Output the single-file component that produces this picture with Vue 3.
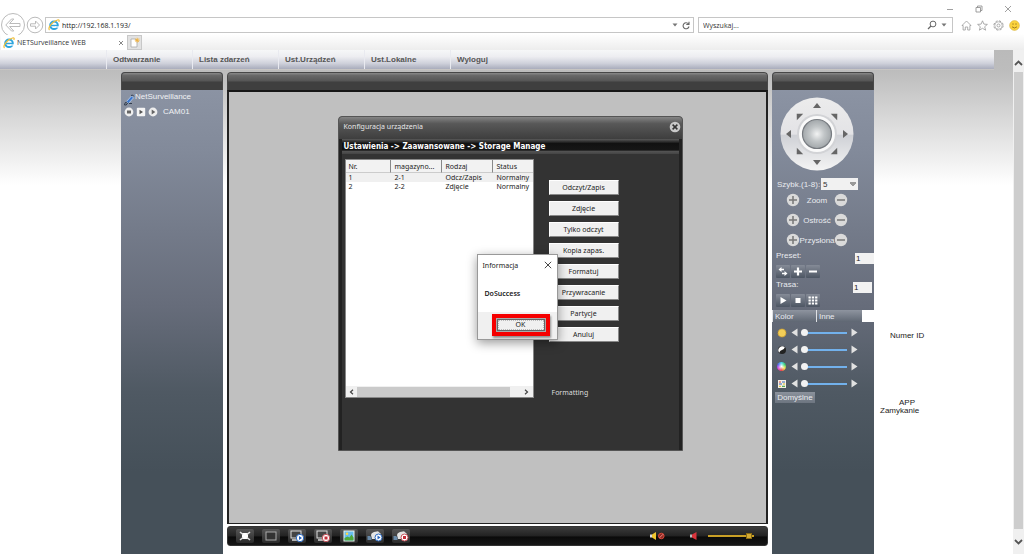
<script setup>
import { ref } from 'vue'

const menu = ['Odtwarzanie', 'Lista zdarzeń', 'Ust.Urządzeń', 'Ust.Lokalne', 'Wyloguj']
const disks = [
  { nr: '1', store: '2-1', kind: 'Odcz/Zapis', status: 'Normalny' },
  { nr: '2', store: '2-2', kind: 'Zdjęcie', status: 'Normalny' },
]
const actions = ['Odczyt/Zapis', 'Zdjęcie', 'Tylko odczyt', 'Kopia zapas.', 'Formatuj', 'Przywracanie', 'Partycje', 'Anuluj']
const lens = ['Zoom', 'Ostrość', 'Przysłona']
const levels = ref([
  { id: 'brightness', label: 'Jasność', value: 0 },
  { id: 'contrast', label: 'Kontrast', value: 0 },
  { id: 'hue', label: 'Barwa', value: 0 },
  { id: 'saturation', label: 'Nasycenie', value: 0 },
])
const volume = ref(94)
const url = ref('http://192.168.1.193/')
const preset = ref('1')
const tour = ref('1')
const speed = ref('5')
const arrows = [0, 45, 90, 135, 180, 225, 270, 315]
</script>

<template>
  <div class="window">
    <header class="chrome">
      <div class="titlebar">
        <button aria-label="Minimalizuj"><svg width="8" height="8" viewBox="0 0 8 8"><path d="M1 4.5h6" /></svg></button>
        <button aria-label="Przywróć"><svg width="8" height="8" viewBox="0 0 8 8"><path d="M1 2.5h4.5v4.5H1zM2.500 2.500V1h4.500v4.500H5.500" /></svg></button>
        <button aria-label="Zamknij"><svg width="8" height="8" viewBox="0 0 8 8"><path d="M1 1l6 6M7 1L1 7" /></svg></button>
      </div>
      <div class="address">
        <button class="back" aria-label="Wstecz">
          <svg width="26" height="26" viewBox="0 0 26 26"><circle cx="13" cy="13" r="11.500" /><path d="M11.500 7L5.800 13l5.700 6h2.300l-4.200-4.500H20v-3H9.600L13.800 7z" /></svg>
        </button>
        <button class="fwd" aria-label="Dalej">
          <svg width="18" height="18" viewBox="0 0 18 18"><circle cx="9" cy="9" r="7.800" /><path d="M9.500 5l4 4-4 4v-2.800H4.500V7.800h5z" /></svg>
        </button>
        <div class="field url">
          <svg class="ie" width="12" height="12" viewBox="0 0 12 12"><circle cx="6" cy="6.300" r="3.800" fill="none" stroke="#2ea5dd" stroke-width="2" /><path d="M3 6.500h7" stroke="#2ea5dd" stroke-width="1.500" /><path d="M7 8h4" stroke="#fff" stroke-width="1.200" /><path d="M1.500 11C-.5 9 4 2.500 9.500 1c2-.4 2 .8 1.200 2" fill="none" stroke="#f0bf3b" stroke-width="1.200" /></svg>
          <input v-model="url" aria-label="Adres">
          <svg width="6" height="4" viewBox="0 0 6 4"><path d="M.5.5h5L3 3.500z" fill="#777" /></svg>
          <button class="reload" aria-label="Odśwież"><svg width="8" height="9" viewBox="0 0 8 9"><path d="M6.500 3A3 3 0 1 0 7 5.500M7 .8v2.700H4.300" fill="none" stroke="#666" stroke-width="1.100" /></svg></button>
        </div>
        <div class="field search">
          <input placeholder="Wyszukaj..." aria-label="Wyszukaj">
          <button aria-label="Szukaj"><svg width="10" height="10" viewBox="0 0 10 10"><circle cx="6" cy="4" r="2.900" fill="none" stroke="#666" /><path d="M4 6L1 9" stroke="#666" stroke-width="1.300" /></svg></button>
          <svg width="6" height="4" viewBox="0 0 6 4"><path d="M.5.5h5L3 3.500z" fill="#777" /></svg>
        </div>
        <nav class="tools" aria-label="Narzędzia">
          <button aria-label="Strona główna"><svg width="11" height="11" viewBox="0 0 11 11"><path d="M1 5.500L5.500 1 10 5.500H8.900V10H6.700V7H4.300v3H2.100V5.500z" /></svg></button>
          <button aria-label="Ulubione"><svg width="11" height="11" viewBox="0 0 11 11"><path d="M5.500.8l1.400 3.300 3.500.3-2.700 2.300.9 3.500-3.100-1.900-3.100 1.900.9-3.500L.6 4.400l3.500-.3z" /></svg></button>
          <button aria-label="Ustawienia"><svg width="11" height="11" viewBox="0 0 11 11"><circle cx="5.500" cy="5.500" r="4.600" stroke-dasharray="2.200 1.400" stroke-width="1" /><circle cx="5.500" cy="5.500" r="3.700" stroke-width=".6" /><circle cx="5.500" cy="5.500" r="1.500" /></svg></button>
          <button aria-label="Opinia"><svg width="11" height="11" viewBox="0 0 11 11"><circle cx="5.500" cy="5.500" r="4.900" fill="#fbd33e" stroke="#d9b64a" stroke-width=".6" /><path d="M4 3.300v1.500M7 3.300v1.500M3 6.800q2.500 2.400 5 0" stroke="#8b6a1c" stroke-width=".8" /></svg></button>
        </nav>
      </div>
      <div class="tabs">
        <div class="tab">
          <svg class="ie" width="12" height="12" viewBox="0 0 12 12"><circle cx="6" cy="6.300" r="3.800" fill="none" stroke="#2ea5dd" stroke-width="2" /><path d="M3 6.500h7" stroke="#2ea5dd" stroke-width="1.500" /><path d="M7 8h4" stroke="#fff" stroke-width="1.200" /><path d="M1.500 11C-.5 9 4 2.500 9.500 1c2-.4 2 .8 1.200 2" fill="none" stroke="#f0bf3b" stroke-width="1.200" /></svg>
          <span>NETSurveillance WEB</span>
          <button aria-label="Zamknij kartę"><svg width="6" height="6" viewBox="0 0 6 6"><path d="M1 1l4 4M5 1L1 5" stroke="#888" /></svg></button>
        </div>
        <button class="newtab" aria-label="Nowa karta"><svg width="11" height="12" viewBox="0 0 11 12"><path d="M2 2h4l2 2v6H2z" fill="#fff" stroke="#aaa" stroke-width=".8" /><path d="M8.200.8v4.800M5.800 3.200h4.800M6.500 1.500l3.400 3.400M9.900 1.500L6.500 4.900" stroke="#f2b23c" stroke-width=".9" /></svg></button>
      </div>
    </header>

    <div class="viewport">
      <main class="page">
        <nav class="menu" aria-label="Menu">
          <a v-for="m in menu" :key="m" href="#">{{ m }}</a>
        </nav>

        <div class="columns">
          <aside class="side">
            <div class="cap"></div>
            <div class="tree">
              <div class="device">
                <svg width="12" height="12" viewBox="0 0 12 12"><path d="M3.500 7.500L8.500 2l2 1.800-5 5.700z" fill="#3c78cf" stroke="#c6d8f2" stroke-width=".7" /><path d="M8 1.500q2-1.200 2.800.8M4 8q-2.500 0-2.500 3h1.800q.2-2 2.200-2M6 9.500h3" stroke="#273345" stroke-width=".9" fill="none" /></svg>
                <span>NetSurveillance</span>
              </div>
              <div class="camera">
                <svg width="10" height="10" viewBox="0 0 10 10"><circle cx="5" cy="5" r="4.400" fill="#eee" /><rect x="3" y="3.500" width="4" height="3" fill="#666" /></svg>
                <svg width="10" height="10" viewBox="0 0 10 10"><rect x=".8" y=".8" width="8.400" height="8.400" rx="1" fill="#f4f4f4" /><path d="M3.500 2.800L7 5 3.500 7.200z" fill="#555" /></svg>
                <svg width="10" height="10" viewBox="0 0 10 10"><circle cx="5" cy="5" r="4.400" fill="#eee" /><path d="M3.700 2.600L7.300 5 3.700 7.400z" fill="#666" /></svg>
                <span>CAM01</span>
              </div>
            </div>
          </aside>

          <section class="center">
            <div class="cap"></div>
            <div class="video">
              <section class="dialog" aria-label="Konfiguracja urządzenia">
                <header>
                  <span>Konfiguracja urządzenia</span>
                  <button aria-label="Zamknij okno"><svg width="12" height="12" viewBox="0 0 12 12"><circle cx="6" cy="6" r="5.300" fill="#c9c9c9" /><path d="M3.600 3.600l4.800 4.800M8.400 3.600L3.600 8.400" stroke="#333" stroke-width="1.500" /></svg></button>
                </header>
                <h1>Ustawienia -&gt; Zaawansowane -&gt; Storage Manage</h1>
                <div class="storage">
                  <div class="list">
                    <table>
                      <thead><tr><th>Nr.</th><th>magazyno...</th><th>Rodzaj</th><th>Status</th></tr></thead>
                      <tbody>
                        <tr v-for="d in disks" :key="d.nr"><td>{{ d.nr }}</td><td>{{ d.store }}</td><td>{{ d.kind }}</td><td>{{ d.status }}</td></tr>
                      </tbody>
                    </table>
                    <div class="hscroll">
                      <button aria-label="Przewiń w lewo"><svg width="5" height="6" viewBox="0 0 5 6"><path d="M4 .8L1.500 3 4 5.200" fill="none" stroke="#444" stroke-width="1.200" /></svg></button>
                      <i></i>
                      <button aria-label="Przewiń w prawo"><svg width="5" height="6" viewBox="0 0 5 6"><path d="M1 .8L3.500 3 1 5.200" fill="none" stroke="#444" stroke-width="1.200" /></svg></button>
                    </div>
                  </div>
                  <div class="actions">
                    <button v-for="a in actions" :key="a">{{ a }}</button>
                    <p>Formatting</p>
                  </div>
                </div>

                <div class="message" role="alertdialog" aria-label="Informacja">
                  <div class="mhead">
                    <span>Informacja</span>
                    <button aria-label="Zamknij komunikat"><svg width="8" height="8" viewBox="0 0 8 8"><path d="M.8.800l6.400 6.400M7.200.800L.8 7.200" stroke="#333" stroke-width=".9" /></svg></button>
                  </div>
                  <p>DoSuccess</p>
                  <div class="mfoot"><div class="mark"><button>OK</button></div></div>
                </div>
              </section>
            </div>
            <div class="playbar">
              <button aria-label="Pełny ekran"><svg width="18" height="14" viewBox="0 0 18 14"><rect x="6" y="4" width="6" height="6" fill="#fff" /><path d="M4 3l3 2.500M14 3l-3 2.500M4 11l3-2.500M14 11l-3-2.500" stroke="#ddd" stroke-width="1.600" /></svg></button>
              <button aria-label="Jedno okno"><svg width="18" height="14" viewBox="0 0 18 14"><rect x="4" y="3" width="10" height="8" fill="#333" stroke="#aaa" /></svg></button>
              <button aria-label="Odtwórz wszystko"><svg width="18" height="14" viewBox="0 0 18 14"><rect x="3" y="2" width="10" height="7" fill="#444" stroke="#ddd" /><path d="M4 11h6" stroke="#ddd" stroke-width="1.500" /><circle cx="12" cy="9" r="3.700" fill="#fff" stroke="#2d6cc4" /><path d="M11 7l3 2-3 2z" fill="#2562bd" /></svg></button>
              <button aria-label="Zatrzymaj wszystko"><svg width="18" height="14" viewBox="0 0 18 14"><rect x="3" y="2" width="10" height="7" fill="#444" stroke="#ddd" /><path d="M4 11h6" stroke="#ddd" stroke-width="1.500" /><circle cx="12" cy="9" r="3.700" fill="#fff" stroke="#c5525a" /><rect x="10.500" y="7.500" width="3" height="3" fill="#c52f3a" /></svg></button>
              <button aria-label="Zdjęcie"><svg width="18" height="14" viewBox="0 0 18 14"><rect x="4" y="2" width="10" height="10" fill="#68bdf0" stroke="#eef6ee" /><circle cx="7" cy="4.800" r="1.300" fill="#ffd94a" /><path d="M4.500 11.500V9l3-1.500 2 1 2-3 2 3v3z" fill="#4fa83c" /></svg></button>
              <button aria-label="Nagrywaj"><svg width="18" height="14" viewBox="0 0 18 14"><path d="M5 6q0-2 3-3l4-.8L15 5l-5 5H6z" fill="#e4e4e4" /><path d="M1.500 7h2.500l1.500 1.500V11H1.500z" fill="#6889a8" /><circle cx="12.500" cy="8.500" r="3.500" fill="#fff" stroke="#2d6cc4" /><path d="M11.500 6.500l3 2-3 2z" fill="#2562bd" /></svg></button>
              <button aria-label="Zatrzymaj nagrywanie"><svg width="18" height="14" viewBox="0 0 18 14"><path d="M5 6q0-2 3-3l4-.8L15 5l-5 5H6z" fill="#e4e4e4" /><path d="M1.500 7h2.500l1.500 1.500V11H1.500z" fill="#6889a8" /><circle cx="12.500" cy="8.500" r="3.500" fill="#fff" stroke="#c5525a" /><rect x="11" y="7" width="3" height="3" fill="#c52f3a" /></svg></button>
              <div class="sound">
                <button aria-label="Wycisz"><svg width="16" height="10" viewBox="0 0 16 10"><path d="M1 3.500h2v3H1z" fill="#ddd" /><path d="M3 3.500L7 1v8L3 6.500z" fill="#f0c630" /><circle cx="12.300" cy="5" r="2.800" fill="#8e2a22" stroke="#d6483a" /><path d="M10.500 6.800l3.600-3.600" stroke="#e88" /></svg></button>
                <button aria-label="Głośność"><svg width="10" height="10" viewBox="0 0 10 10"><path d="M1 3.500h2v3H1z" fill="#bbb" /><path d="M3 3.500L7.500 1v8L3 6.500z" fill="#d9343c" /></svg></button>
                <input v-model="volume" type="range" aria-label="Poziom głośności">
              </div>
            </div>
          </section>

          <aside class="side ptz">
            <div class="cap"></div>
            <div class="panel">
              <svg class="dpad" width="76" height="76" viewBox="0 0 76 76" role="img" aria-label="Sterowanie kamerą">
                <defs>
                  <linearGradient id="ring" x1="0" y1="0" x2="0" y2="1"><stop offset="0" stop-color="#ececec" /><stop offset=".5" stop-color="#e3e3e6" /><stop offset=".52" stop-color="#cfd1d6" /><stop offset="1" stop-color="#f4f4f4" /></linearGradient>
                  <radialGradient id="ball"><stop offset="0" stop-color="#f2f3f3" /><stop offset=".5" stop-color="#c2c6c8" /><stop offset="1" stop-color="#a2a7aa" /></radialGradient>
                </defs>
                <circle cx="38" cy="38" r="36.500" fill="url(#ring)" />
                <circle cx="38" cy="38" r="20" fill="#d2d3d6" />
                <circle cx="38" cy="38" r="18" fill="#fafafa" />
                <circle cx="38" cy="38" r="14.500" fill="url(#ball)" stroke="#777b80" stroke-width="1.200" />
                <g v-for="a in arrows" :key="a" :transform="`rotate(${a} 38 38)`"><path :d="a % 90 ? 'M33.500 14h9L38 9.300z' : 'M34 12h8l-4-5z'" fill="#666" /></g>
              </svg>
              <div class="speed">
                <label for="speed">Szybk.(1-8):</label>
                <select id="speed" v-model="speed"><option v-for="n in 8" :key="n">{{ n }}</option></select>
              </div>
              <div v-for="l in lens" :key="l" class="lens">
                <button :aria-label="l + ' plus'"><svg width="14" height="14" viewBox="0 0 14 14"><circle cx="7" cy="7" r="6.200" fill="#dadada" /><path d="M3 7h8M7 3v8" stroke="#777" stroke-width="1.500" /></svg></button>
                <span>{{ l }}</span>
                <button :aria-label="l + ' minus'"><svg width="14" height="14" viewBox="0 0 14 14"><circle cx="7" cy="7" r="6.200" fill="#dadada" /><path d="M3 7h8" stroke="#777" stroke-width="1.500" /></svg></button>
              </div>
              <div class="num"><label for="preset">Preset:</label><input id="preset" v-model="preset"></div>
              <div class="keys">
                <button aria-label="Idź do"><svg width="14" height="13" viewBox="0 0 14 13"><path d="M2.500 4.500L5.500 2v1.700h2.500v1.600H5.500V7zM11.500 8.500l-3 2.500V9.300H6V7.700h2.500V6z" fill="#fff" /></svg></button>
                <button aria-label="Dodaj"><svg width="14" height="13" viewBox="0 0 14 13"><path d="M3 6.500h8M7 2.500v8" stroke="#fff" stroke-width="2.200" /></svg></button>
                <button aria-label="Usuń"><svg width="14" height="13" viewBox="0 0 14 13"><path d="M3 6.500h8" stroke="#fff" stroke-width="2" /></svg></button>
              </div>
              <div class="num tour"><label for="tour">Trasa:</label><input id="tour" v-model="tour"></div>
              <div class="keys">
                <button aria-label="Start"><svg width="14" height="13" viewBox="0 0 14 13"><path d="M4.500 3l6 3.500-6 3.500z" fill="#fff" /></svg></button>
                <button aria-label="Stop"><svg width="14" height="13" viewBox="0 0 14 13"><rect x="4.500" y="4" width="5" height="5" fill="#fff" /></svg></button>
                <button aria-label="Lista"><svg width="14" height="13" viewBox="0 0 14 13"><path d="M2.500 3.500h9M2.500 6.500h9M2.500 9.500h9" stroke="#fff" stroke-width="2.200" stroke-dasharray="2.300 1" /></svg></button>
              </div>
              <div class="ctabs"><button>Kolor</button><button>Inne</button></div>
              <div v-for="s in levels" :key="s.id" class="level">
                <svg v-if="s.id === 'brightness'" width="10" height="10" viewBox="0 0 10 10"><circle cx="5" cy="5" r="4" fill="#f3ce57" stroke="#c99a2c" stroke-dasharray="1.500 .7" /></svg>
                <svg v-else-if="s.id === 'contrast'" width="10" height="10" viewBox="0 0 10 10"><circle cx="5" cy="5" r="4" fill="#222" /><path d="M7.800 2.200A4 4 0 0 0 2.200 7.800q1-2.800 2.800-2.800t2.800-2.800z" fill="#fff" /></svg>
                <span v-else-if="s.id === 'hue'" class="wheel"></span>
                <svg v-else width="10" height="10" viewBox="0 0 10 10"><rect x="1" y="1" width="8" height="8" fill="#f5efe5" /><path d="M2 3h2" stroke="#d43" /><path d="M5 3h3M2 5h3" stroke="#36b" /><path d="M6 5h2M2 7.300h2" stroke="#db2" /><path d="M5 7.300h3" stroke="#393" /></svg>
                <button :aria-label="s.label + ' mniej'"><svg width="7" height="9" viewBox="0 0 7 9"><path d="M6.500.5v8L.5 4.500z" fill="#e2e2e2" /></svg></button>
                <input v-model="s.value" type="range" :aria-label="s.label">
                <button :aria-label="s.label + ' więcej'"><svg width="7" height="9" viewBox="0 0 7 9"><path d="M.5.5v8l6-4z" fill="#e2e2e2" /></svg></button>
              </div>
              <button class="default">Domyślne</button>
            </div>
          </aside>

          <aside class="notes">
            <p>Numer ID</p>
            <p class="app">APP<br>Zamykanie</p>
          </aside>
        </div>
      </main>
      <div class="vscroll">
        <button aria-label="W górę"><svg width="9" height="6" viewBox="0 0 9 6"><path d="M1 5l3.500-3.500L8 5" fill="none" stroke="#555" stroke-width="1.800" /></svg></button>
        <i></i>
        <button aria-label="W dół"><svg width="9" height="6" viewBox="0 0 9 6"><path d="M1 1l3.500 3.500L8 1" fill="none" stroke="#555" stroke-width="1.800" /></svg></button>
      </div>
    </div>
  </div>
</template>

<style>
body { margin: 0; background: #fff; }
</style>

<style scoped>
* { box-sizing: border-box; }
.window { min-height: 100vh; display: flex; flex-direction: column; font: 7px/9px "Liberation Sans", Arial, sans-serif; color: #222; background: #fff; }
button, input, select { font: inherit; color: inherit; margin: 0; padding: 0; border: 0; background: none; min-width: 0; }
button { display: block; cursor: pointer; }
svg { display: block; flex: none; }
p, h1 { margin: 0; font-weight: normal; }
a { color: inherit; text-decoration: none; }

.chrome { font-family: "Open Sans", "Noto Sans", sans-serif; }
.titlebar { height: 16px; display: flex; justify-content: flex-end; align-items: center; gap: 21px; padding: 2px 12px 0 0; }
.titlebar path { fill: none; stroke: #888; stroke-width: .8; }
.address { height: 18px; display: flex; align-items: center; padding-right: 4px; }
.fwd { margin-right: 1px; }
.back svg, .fwd svg { fill: none; stroke: #bbb; stroke-width: 1; }
.field { height: 16px; border: 1px solid #c6c6c6; display: flex; align-items: center; background: #fff; }
.field input { flex: 1; outline: 0; height: 12px; }
.field input::placeholder { color: #333; opacity: 1; }
.url { flex: 1; padding: 0 3px 0 2px; gap: 2px; }
.reload { margin-left: 2px; }
.search { flex: 0 0 25%; margin-left: 4px; padding: 0 5px 0 4px; gap: 4px; }
.tools { display: flex; gap: 5px; margin-left: 8px; }
.tools svg { fill: none; stroke: #999; stroke-width: .8; }
.tabs { height: 16px; padding: 1px 0 0 1px; display: flex; background: linear-gradient(#fff, #ededed); }
.tab { width: 126px; background: #fff; display: flex; align-items: center; gap: 2px; padding: 0 3px 0 2px; color: #333; }
.tab span { flex: 1; white-space: nowrap; }
.newtab { width: 15px; background: #e2e2e2; border: 1px solid #c8c8c8; padding-left: 1px; }

.viewport { flex: 1; display: flex; }
.page { flex: 1; min-width: 0; display: flex; flex-direction: column; background: linear-gradient(#bababa, #bdbdbd 22px, #fff 135px); }
.menu { height: 19px; margin-right: 19px; padding-left: 106px; display: flex; background: linear-gradient(#f6f7f8, #ededf1 35%, #cfd1db 70%, #a9acbc); box-shadow: 0 1px #c7c5c3; }
.menu a { width: 86px; border-left: 1px solid #e9eaf0; padding-left: 6px; font-weight: bold; font-size: 8px; line-height: 20px; color: #555; white-space: nowrap; }
.columns { flex: 1; display: grid; grid-template-columns: 102px minmax(0, 1fr) 102px 135px; column-gap: 4px; padding: 3px 0 0 121px; }
.cap { height: 18px; border-radius: 4px 4px 0 0; border: 1px solid #484848; border-bottom: 0; background: linear-gradient(#8a8a8a, #686868 15%, #555 48%, #3f3f3f 52%, #3f3f3f); }
.side { display: flex; flex-direction: column; color: #e9ebef; font-size: 8px; background: linear-gradient(#8b93a3 18px, #828a9a 80px, #666c7a 235px, #4f5963 320px, #455059 400px); border-radius: 4px 4px 0 0; }
.tree { padding: 2px 2px 0; }
.device, .camera { display: flex; line-height: 10px; color: #f0f1f4; }
.device { height: 15px; }
.device svg { margin-top: 2px; }
.camera { gap: 2px; padding: 0 1px; align-items: center; }
.camera span { margin-left: 3px; }

.center { display: flex; flex-direction: column; background: #fff; border-radius: 4px 4px 0 0; padding-bottom: 8px; }
.video { position: relative; flex: 1; border: 2px solid #222; border-top-color: #161616; border-bottom-width: 1px; background: #c0c0c0; }
.playbar { height: 20px; margin-top: 2px; border-radius: 3px; border: 1px solid #333; background: linear-gradient(#3c3c3c, #222 50%, #0a0a0a 55%, #161616); display: flex; align-items: center; gap: 8px; padding: 0 13px 0 8px; }
.playbar > button { border-radius: 2px; background: linear-gradient(#555, #2b2b2b); }
.sound { margin-left: auto; display: flex; align-items: center; }
.sound button + button { margin-left: 24px; }
.sound input { width: 46px; height: 8px; margin-left: 9px; appearance: none; background: linear-gradient(#c99f25, #c99f25) 0 50% / 100% 2px no-repeat; }
.sound input::-webkit-slider-thumb { appearance: none; width: 6px; height: 6px; background: #d3aa35; border: 1px solid #8a6b12; }

.dialog { position: absolute; left: calc(50% - 160px); top: 24px; width: 345px; height: 335px; display: flex; flex-direction: column; border: 1px solid #555; border-radius: 4px 4px 0 0; background: #333; box-shadow: inset 3px 0 #222, inset -3px 0 #222; font-family: "Noto Sans", "Open Sans", sans-serif; }
.dialog header { height: 22px; display: flex; justify-content: space-between; align-items: center; padding: 0 1px 3px 5px; color: #e8e8e8; background: linear-gradient(#858585, #585858 30%, #3e3e3e); border-radius: 3px 3px 0 0; }
.dialog h1 { height: 15px; margin: 0 3px; padding-left: 2px; font: bold 8px/15px "DejaVu Sans Condensed", "Open Sans", sans-serif; color: #fff; background: linear-gradient(#5a5a5a, #111 30%, #161616 75%, #555 80%, #444); white-space: nowrap; }
.storage { display: flex; padding: 5px 6px 0; gap: 15px; }
.list { width: 189px; height: 239px; display: flex; flex-direction: column; border: 1px solid #888; background: #fff; color: #222; }
table { width: 100%; border-collapse: separate; border-spacing: 0; table-layout: fixed; text-align: left; }
th { height: 13px; padding: 1px 0 0 4px; font-weight: normal; background: #f2f2f2; border-right: 1px solid #888; border-bottom: 1px solid #ccc; line-height: 11px; }
th:last-child { border-right: 0; }
th:first-child { width: 45px; }
th:nth-child(2), th:nth-child(3) { width: 51px; }
td { height: 9px; padding: 0 0 0 4px; line-height: 9px; white-space: nowrap; }
td:first-child, th:first-child { padding-left: 3px; }
tbody tr:first-child { background: #f0f0f0; }
.hscroll { margin-top: auto; height: 11px; background: #f0f0f0; display: flex; align-items: center; justify-content: space-between; padding: 0 4px 0 3px; }
.hscroll i { width: 153px; height: 10px; background: #cacaca; margin-right: auto; margin-left: 3px; }
.actions { padding-top: 21px; display: flex; flex-direction: column; gap: 6px; color: #ddd; }
.actions button { width: 70px; height: 15px; background: #f0f0f0; color: #222; border: 1px solid; border-color: #fff #888 #888 #fff; }
.actions p { margin: 40px 0 0 3px; }

.message { position: absolute; left: 138px; top: 137px; width: 81px; height: 86px; display: flex; flex-direction: column; background: #fff; border: 1px solid #999; box-shadow: 0 3px 10px rgba(0, 0, 0, .4); color: #222; }
.mhead { height: 20px; display: flex; justify-content: space-between; align-items: center; padding: 0 5px; }
.message p { flex: 1; padding: 14px 0 0 7px; font-weight: 600; }
.mfoot { height: 27px; background: #f0f0f0; padding: 2px 7px 0 14px; }
.mark { border: 4px solid #f50000; padding: 1px; background: #aaa; box-shadow: 1px 2px 2px rgba(0, 0, 0, .4); }
.mark button { width: 100%; height: 12px; line-height: 8px; border: 1px solid #666; background: #f0f0f0; outline: 1px dotted #bbb; outline-offset: -2px; }

.panel { flex: 1; padding-top: 6px; display: flex; flex-direction: column; }
.dpad { margin-left: 7px; }
.speed { display: flex; align-items: center; justify-content: space-between; height: 12px; margin-top: 6px; padding: 0 16px 0 5px; white-space: nowrap; }
.speed select { width: 37px; height: 12px; padding-left: 2px; appearance: none; color: #333; background: linear-gradient(#999, #999) right 2px top 4px / 6px 2px no-repeat, linear-gradient(#999, #999) right 3px top 6px / 4px 1px no-repeat, linear-gradient(#999, #999) right 4px top 7px / 2px 1px no-repeat, #f1f1f1; }
.lens { display: grid; grid-template-columns: 14px 34px 14px; align-items: center; height: 20px; margin-left: 14px; }
.lens span { display: flex; justify-content: center; white-space: nowrap; }
.num { height: 15px; display: flex; justify-content: space-between; padding-left: 4px; }
.num input { width: 19px; height: 11px; margin-top: 3px; padding-left: 1px; background: #f2f2f2; color: #222; }
.num label { line-height: 12px; }
.tour { padding-right: 2px; }
.keys { display: flex; gap: 1px; padding-left: 4px; height: 14px; }
.keys button { height: 13px; border-radius: 1px; background: linear-gradient(#858b97, #4d5663); }
.ctabs { display: flex; height: 12px; margin-top: 2px; background: linear-gradient(90deg, transparent 89px, #fff 89px); }
.ctabs button { width: 44px; padding-left: 2px; text-align: left; border-left: 1px solid #dfe1e5; background: linear-gradient(#8e949f, #5f6773); }
.ctabs button + button { width: 46px; }
.level { display: flex; align-items: center; height: 17px; padding-left: 5px; }
.ctabs + .level { margin-top: 2px; }
.level button { margin-left: 4px; }
.level input { width: 46px; height: 9px; margin-left: 3px; appearance: none; background: linear-gradient(#72b1ec, #72b1ec) 3px 50% / 43px 2px no-repeat; }
.level input::-webkit-slider-thumb { appearance: none; width: 7px; height: 7px; border-radius: 50%; background: #f2f2f2; }
.wheel { width: 9px; height: 9px; margin-right: 1px; border-radius: 50%; background: radial-gradient(#fff, transparent 60%), conic-gradient(#4bd3e8, #39d36b, #f5e14a, #f04a4a, #e04ae0, #5a60f0, #4bd3e8); }
.default { width: 40px; height: 11px; margin-left: 3px; background: linear-gradient(#8b929c, #6d7580); }

.notes { font-size: 8px; line-height: 8px; padding: 260px 0 0 12px; }
.app { margin: 59px 0 0 -10px; text-indent: 19px; }
.vscroll { width: 11px; background: #f0f0f0; display: flex; flex-direction: column; align-items: center; }
.vscroll button { height: 22px; padding-top: 4px; }
.vscroll i { flex: 1; width: 9px; background: #cdcdcd; }
.vscroll button:last-child { height: 25px; padding: 0; }
</style>
